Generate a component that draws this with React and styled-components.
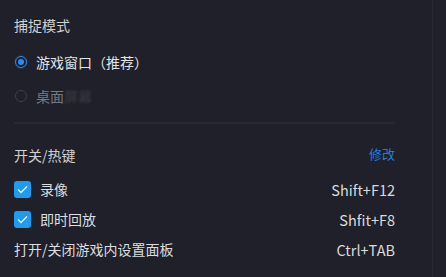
import React from "react";
import styled, { createGlobalStyle } from "styled-components";

const Global = createGlobalStyle`
  html, body { margin: 0; padding: 0; background: #1f2029; }
  body { font-family: "Noto Sans CJK SC", "Noto Sans", sans-serif; }
`;

const Page = styled.div`
  display: flex;
  width: 446px;
  height: 277px;
  background: #1f2029;
  overflow: hidden;
`;

const Content = styled.div`
  width: 381px;
  padding: 15px 34px 0 14px;
  display: flex;
  flex-direction: column;
`;

const Rail = styled.div`
  flex: 1;
  border-left: 1px solid #272831;
  margin-left: 3px;
`;

const Title = styled.div`
  font-size: 14px;
  line-height: 20px;
  color: #cfd0d4;
  margin-top: ${(p) => p.$mt || 0}px;
  display: flex;
  justify-content: space-between;
  align-items: center;
`;

const Link = styled.span`
  font-size: 13px;
  color: #1f7fde;
  margin-top: -3px;
`;

const Option = styled.div`
  display: flex;
  align-items: center;
  height: 20px;
  margin-top: ${(p) => p.$mt}px;
  font-size: 14px;
  color: ${(p) => (p.$dim ? "#777880" : "#e2e3e6")};
`;

const Radio = styled.span`
  box-sizing: border-box;
  width: 12px;
  height: 12px;
  margin-left: 1px;
  margin-right: 9px;
  border-radius: 50%;
  border: 1.5px solid ${(p) => (p.$on ? "#2a8cf0" : "#3e3f47")};
  display: flex;
  align-items: center;
  justify-content: center;
  box-shadow: ${(p) => (p.$on ? "0 0 2px rgba(42,140,240,0.5)" : "none")};
  &::after {
    content: "";
    width: 6px;
    height: 6px;
    border-radius: 50%;
    background: ${(p) => (p.$on ? "#2a8cf0" : "transparent")};
  }
`;

const Faded = styled.span`
  color: #3c3d46;
  filter: blur(1px);
`;

const Divider = styled.div`
  height: 2px;
  background: #282932;
  margin-top: 16px;
`;

const Row = styled.div`
  display: flex;
  align-items: center;
  justify-content: space-between;
  height: 20px;
  margin-top: ${(p) => p.$mt}px;
  font-size: 14px;
  color: #dcdde0;
`;

const Label = styled.span`
  display: flex;
  align-items: center;
`;

const Box = styled.span`
  width: 17px;
  height: 17px;
  border-radius: 3px;
  background: #1f9bf0;
  margin-right: 9px;
  display: flex;
  align-items: center;
  justify-content: center;
`;

const Key = styled.span`
  font-size: 14.5px;
  color: #dadbde;
`;

const Check = () => (
  <Box>
    <svg width="11" height="9" viewBox="0 0 11 9">
      <path d="M1 4.5 L4 7.5 L10 1.5" fill="none" stroke="#e8f4ff" strokeWidth="1.3" />
    </svg>
  </Box>
);

export default function App() {
  return (
    <Page>
      <Global />
      <Content>
        <Title>捕捉模式</Title>
        <Option $mt={17}>
          <Radio $on />
          游戏窗口（推荐）
        </Option>
        <Option $mt={14} $dim>
          <Radio />
          桌面<Faded>屏幕</Faded>
        </Option>
        <Divider />
        <Title $mt={21}>
          开关/热键
          <Link>修改</Link>
        </Title>
        <Row $mt={14}>
          <Label>
            <Check />
            录像
          </Label>
          <Key>Shift+F12</Key>
        </Row>
        <Row $mt={10}>
          <Label>
            <Check />
            即时回放
          </Label>
          <Key>Shfit+F8</Key>
        </Row>
        <Row $mt={10}>
          <Label>打开/关闭游戏内设置面板</Label>
          <Key>Ctrl+TAB</Key>
        </Row>
      </Content>
      <Rail />
    </Page>
  );
}
